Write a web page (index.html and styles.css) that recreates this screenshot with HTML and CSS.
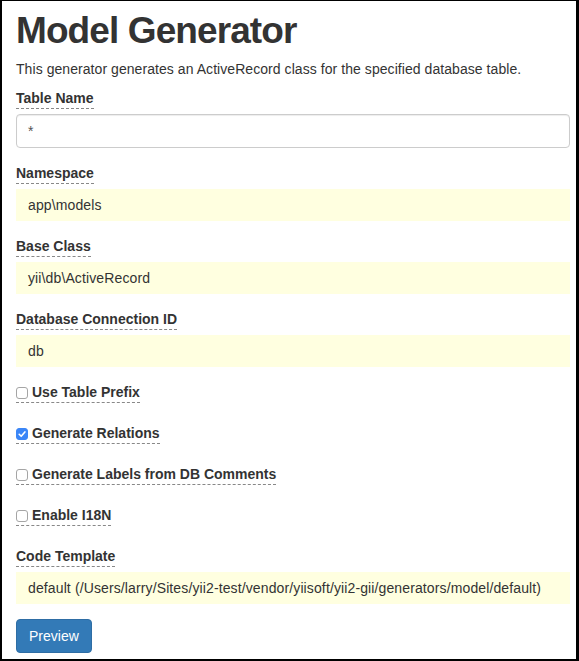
FILE: index.html
```html
<!DOCTYPE html>
<html lang="en">
<head>
<meta charset="utf-8">
<title>Model Generator</title>
<link rel="stylesheet" href="styles.css">
</head>
<body>
<div class="frame">
  <h1 class="title">Model Generator</h1>
  <p class="desc">This generator generates an ActiveRecord class for the specified database table.</p>

  <form class="gen-form">
    <div class="form-group">
      <label class="help">Table Name</label>
      <div class="text-input">*</div>
    </div>
    <div class="form-group">
      <label class="help">Namespace</label>
      <div class="sticky-value">app\models</div>
    </div>
    <div class="form-group">
      <label class="help">Base Class</label>
      <div class="sticky-value">yii\db\ActiveRecord</div>
    </div>
    <div class="form-group">
      <label class="help">Database Connection ID</label>
      <div class="sticky-value">db</div>
    </div>

    <div class="check-group">
      <label class="help check-label"><span class="box"></span>Use Table Prefix</label>
    </div>
    <div class="check-group">
      <label class="help check-label"><span class="box checked"><svg viewBox="0 0 12 12" width="12" height="12"><path d="M3.2 6.3 L5.2 8.3 L8.9 3.9" fill="none" stroke="#fff" stroke-width="1.6" stroke-linecap="round" stroke-linejoin="round"/></svg></span>Generate Relations</label>
    </div>
    <div class="check-group">
      <label class="help check-label"><span class="box"></span>Generate Labels from DB Comments</label>
    </div>
    <div class="check-group">
      <label class="help check-label"><span class="box"></span>Enable I18N</label>
    </div>

    <div class="form-group">
      <label class="help">Code Template</label>
      <div class="sticky-value">default (/Users/larry/Sites/yii2-test/vendor/yiisoft/yii2-gii/generators/model/default)</div>
    </div>

    <div class="actions">
      <button type="button" class="btn-primary">Preview</button>
    </div>
  </form>
</div>
</body>
</html>
```

FILE: styles.css
```css
html, body {
  margin: 0;
  padding: 0;
  background: #000;
}

.frame {
  box-sizing: border-box;
  margin: 1px 0 0 2px;
  width: 574px;
  height: 658px;
  background: #fff;
  overflow: hidden;
  padding: 9px 6px 0 14px;
  font-family: "Liberation Sans", Arial, sans-serif;
  font-size: 14px;
  line-height: 20px;
  color: #333;
}

.title {
  margin: 0;
  font-size: 37px;
  line-height: 41px;
  font-weight: bold;
  letter-spacing: -0.9px;
  color: #333;
}

.desc {
  margin: 8px 0 9px;
  letter-spacing: 0.06px;
}

.gen-form {
  display: block;
}

.form-group {
  margin-bottom: 15px;
}

.help {
  display: inline-block;
  font-weight: bold;
  line-height: 20px;
  border-bottom: 1px dashed #888;
  margin-bottom: 5px;
  cursor: help;
}

.text-input {
  box-sizing: border-box;
  height: 34px;
  padding: 6px 11px;
  border: 1px solid #ccc;
  border-radius: 4px;
  background: #fff;
  color: #555;
  box-shadow: inset 0 1px 1px rgba(0,0,0,0.075);
}

.sticky-value {
  padding: 6px 12px;
  background: #ffffe0;
  white-space: nowrap;
  overflow: hidden;
  letter-spacing: 0.12px;
}

.check-group {
  display: flex;
  margin-bottom: 20px;
}

.check-label {
  margin-bottom: 0;
  display: flex;
  align-items: center;
  height: 20px;
}

.box {
  box-sizing: border-box;
  display: block;
  flex: none;
  width: 12px;
  height: 12px;
  border: 1px solid #a5a5a5;
  border-radius: 3px;
  background: #fff;
  margin-right: 4px;
  margin-top: 1px;
}

.box svg {
  display: block;
  margin: -1px;
}

.box.checked {
  background: #3b86f7;
  border-color: #3b86f7;
}

.actions {
  margin: 0;
}

.btn-primary {
  font-family: "Liberation Sans", Arial, sans-serif;
  font-size: 14px;
  line-height: 20px;
  padding: 6px 12px;
  color: #fff;
  background: #337ab7;
  border: 1px solid #2e6da4;
  border-radius: 4px;
  cursor: pointer;
}
```
